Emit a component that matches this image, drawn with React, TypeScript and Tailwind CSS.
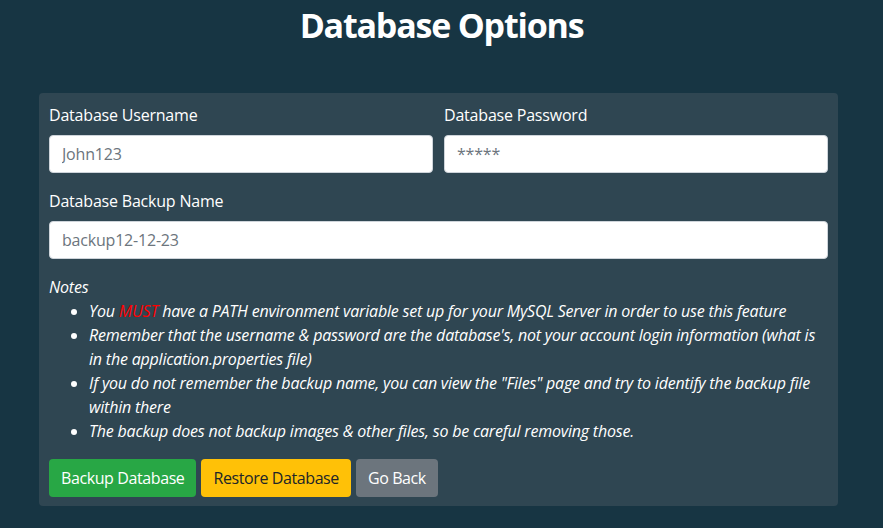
export default function App() {
  return (
    <div
      className="min-h-[528px] bg-[#173543] text-white tracking-[-0.2px]"
      style={{ fontFamily: '"Open Sans", "Noto Sans", sans-serif' }}
    >
      <h1 className="pt-[4px] text-center text-[34px] font-bold leading-[1.25] tracking-[-1.2px]">Database Options</h1>

      <div className="ml-[39px] mr-[45px] mt-[46px] rounded bg-[#2f4652] px-[10px] pt-[10px] pb-[9px]">
        <div className="grid grid-cols-2 gap-x-[11px]">
          <div className="mb-4">
            <label className="mb-2 block text-base leading-6">Database Username</label>
            <input
              placeholder="John123"
              className="block h-[38px] w-full rounded border border-[#ced4da] bg-white px-3 text-base text-[#495057] placeholder:text-[#6c757d] outline-none"
            />
          </div>
          <div className="mb-4">
            <label className="mb-2 block text-base leading-6">Database Password</label>
            <input
              placeholder="*****"
              className="block h-[38px] w-full rounded border border-[#ced4da] bg-white px-3 text-base text-[#495057] placeholder:text-[#6c757d] outline-none"
            />
          </div>
        </div>

        <div className="mb-4">
          <label className="mb-2 block text-base leading-6">Database Backup Name</label>
          <input
            placeholder="backup12-12-23"
            className="block h-[38px] w-full rounded border border-[#ced4da] bg-white px-3 text-base text-[#495057] placeholder:text-[#6c757d] outline-none"
          />
        </div>

        <div className="mb-4 text-base italic leading-6">
          <p>Notes</p>
          <ul className="list-disc pl-10">
            <li>
              You <span className="text-[#ff0000]">MUST</span> have a PATH environment variable set up for your MySQL
              Server in order to use this feature
            </li>
            <li>
              Remember that the username &amp; password are the database's, not your account login information (what
              is in the application.properties file)
            </li>
            <li>
              If you do not remember the backup name, you can view the "Files" page and try to identify the backup file
              within there
            </li>
            <li>The backup does not backup images &amp; other files, so be careful removing those.</li>
          </ul>
        </div>

        <div className="flex gap-[5px]">
          <button className="h-[38px] rounded bg-[#28a745] px-3 text-base tracking-[-0.4px] text-white">Backup Database</button>
          <button className="h-[38px] rounded bg-[#ffc107] px-3 text-base tracking-[-0.4px] text-[#212529]">Restore Database</button>
          <button className="h-[38px] rounded bg-[#6c757d] px-3 text-base tracking-[-0.4px] text-white">Go Back</button>
        </div>
      </div>
    </div>
  );
}
